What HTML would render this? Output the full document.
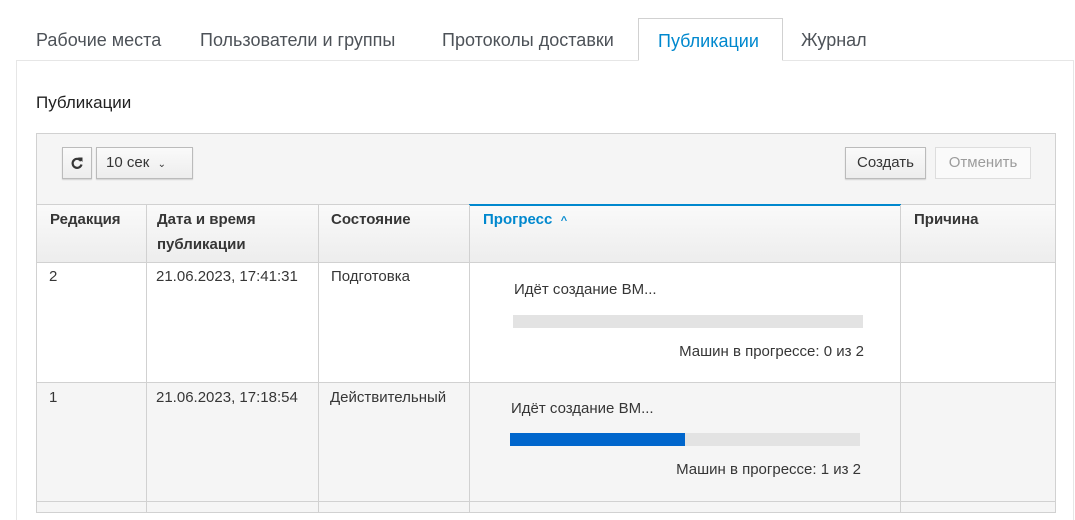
<!DOCTYPE html>
<html><head><meta charset="utf-8"><style>
*{box-sizing:border-box;margin:0;padding:0}
body{width:1075px;height:504px;overflow:hidden;background:#fff;font-family:"Liberation Sans","DejaVu Sans",sans-serif;color:#363636;position:relative}
.tab{position:absolute;top:18px;height:43px;line-height:44px;font-size:18px;color:#4d5258}
.tab.act{border:1px solid #d1d1d1;border-bottom:1px solid #fff;background:#fff;color:#0088ce;z-index:2;padding:0 19px}
.panel{position:absolute;left:16px;top:60px;width:1058px;height:460px;border:1px solid #e6e6e6;border-bottom:none}
h2{position:absolute;left:36px;top:92px;font-size:17px;font-weight:normal;color:#222}
.tbl{position:absolute;left:36px;top:133px;width:1020px;height:380px;border:1px solid #d1d1d1;background:#f5f5f5}
.tool{height:71px;border-bottom:1px solid #d1d1d1;position:relative}
.btn{position:absolute;height:32px;border:1px solid #bbb;background:linear-gradient(#fafafa,#ededed);box-shadow:0 1px 1px rgba(0,0,0,.15);font-size:15px;line-height:30px;color:#363636;text-align:center}
.col{position:absolute;top:71px;bottom:0;border-right:1px solid #d1d1d1}
.hdr{position:absolute;left:0;right:0;top:71px;height:58px;border-bottom:1px solid #d1d1d1;background:linear-gradient(#fafafa,#ededed)}
.row1{position:absolute;left:0;right:0;top:129px;height:120px;background:#fff;border-bottom:1px solid #d1d1d1}
.t{position:absolute;font-size:15px}
.th{font-weight:bold;line-height:25px;top:73px}
.bar{position:absolute;height:13px;background:#e3e3e3}
.r{text-align:right;width:351px}
</style></head><body>
<div class="tab" style="left:36px">Рабочие места</div>
<div class="tab" style="left:200px">Пользователи и группы</div>
<div class="tab" style="left:442px">Протоколы доставки</div>
<div class="tab act" style="left:638px;width:145px">Публикации</div>
<div class="tab" style="left:801px">Журнал</div>
<div class="panel"></div>
<h2 style="top:93px">Публикации</h2>
<div class="tbl">
 <div class="tool">
  <div class="btn" style="left:25px;top:13px;width:30px;font-weight:bold">
   <svg width="14" height="14" viewBox="0 0 14 14" style="margin-top:8px"><path d="M11 5A4.5 4.5 0 1 0 11.5 8.5" fill="none" stroke="#363636" stroke-width="2.2"/><path d="M8 1.5L12.5 1.5L12.5 6Z" fill="#363636"/></svg>
  </div>
  <div class="btn" style="left:59px;top:13px;width:97px;text-align:left;padding-left:9px">10 сек &nbsp;<span style="font-size:10px">⌄</span></div>
  <div class="btn" style="left:808px;top:13px;width:81px">Создать</div>
  <div class="btn" style="left:898px;top:13px;width:96px;color:#9c9c9c;background:#fafafa;box-shadow:none;border-color:#ddd">Отменить</div>
 </div>
 <div class="hdr"></div>
 <div style="position:absolute;left:432px;width:432px;top:70px;height:2px;background:#0088ce"></div>
 <div class="row1"></div>
 <div class="col" style="left:0;width:110px"></div>
 <div class="col" style="left:110px;width:172px"></div>
 <div class="col" style="left:282px;width:151px"></div>
 <div class="col" style="left:433px;width:431px"></div>
 <div class="t th" style="left:13px">Редакция</div>
 <div class="t th" style="left:120px">Дата и время<br>публикации</div>
 <div class="t th" style="left:294px">Состояние</div>
 <div class="t th" style="left:446px;color:#0088ce">Прогресс &nbsp;<span style="font-size:11px">^</span></div>
 <div class="t th" style="left:877px">Причина</div>
 <div class="t" style="left:12px;top:134px">2</div>
 <div class="t" style="left:119px;top:134px">21.06.2023, 17:41:31</div>
 <div class="t" style="left:294px;top:134px">Подготовка</div>
 <div class="t" style="left:477px;top:147px">Идёт создание ВМ...</div>
 <div class="bar" style="left:476px;top:181px;width:350px"></div>
 <div class="t r" style="left:476px;top:209px">Машин в прогрессе: 0 из 2</div>
 <div class="t" style="left:12px;top:255px">1</div>
 <div class="t" style="left:119px;top:255px">21.06.2023, 17:18:54</div>
 <div class="t" style="left:293px;top:255px">Действительный</div>
 <div class="t" style="left:474px;top:266px">Идёт создание ВМ...</div>
 <div class="bar" style="left:473px;top:299px;width:350px"><div style="width:175px;height:13px;background:#0066cc"></div></div>
 <div class="t r" style="left:473px;top:327px">Машин в прогрессе: 1 из 2</div>
 <div style="position:absolute;left:0;right:0;top:367px;border-top:1px solid #d1d1d1"></div>
</div>
</body></html>
